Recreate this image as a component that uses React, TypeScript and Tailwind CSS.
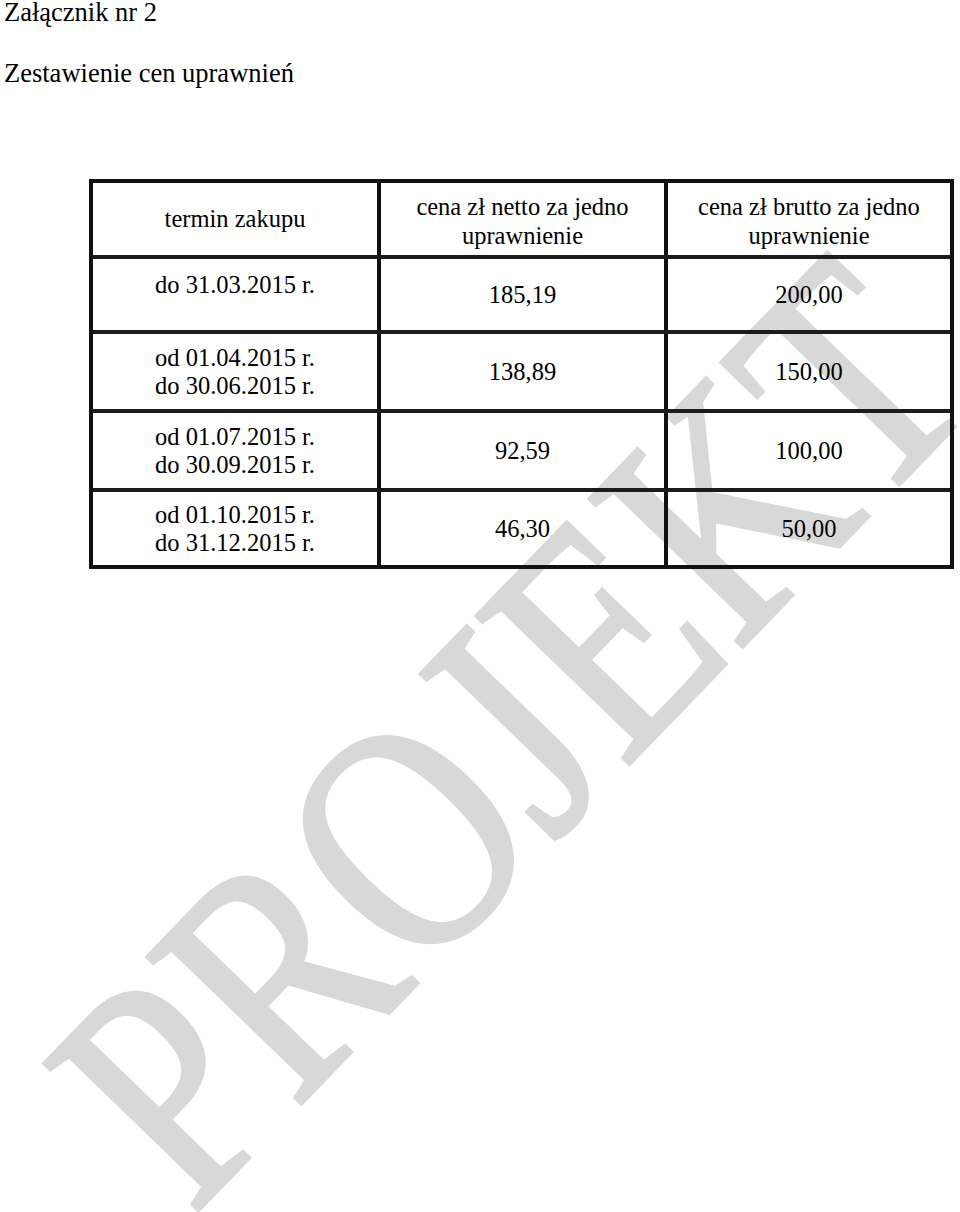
const rows = [
  { term: ["do 31.03.2015 r."], netto: "185,19", brutto: "200,00", h: "h-[75px]", topAligned: true },
  { term: ["od 01.04.2015 r.", "do 30.06.2015 r."], netto: "138,89", brutto: "150,00", h: "h-[79px]", topAligned: false },
  { term: ["od 01.07.2015 r.", "do 30.09.2015 r."], netto: "92,59", brutto: "100,00", h: "h-[79px]", topAligned: false },
  { term: ["od 01.10.2015 r.", "do 31.12.2015 r."], netto: "46,30", brutto: "50,00", h: "h-[77px]", topAligned: false },
];

function Watermark() {
  return (
    <div
      aria-hidden
      className="pointer-events-none absolute left-[509px] top-[731px] z-0 -translate-x-1/2 -translate-y-1/2 rotate-[-46deg] scale-x-[0.82] select-none whitespace-nowrap text-[325px] leading-none text-[#d8d8d8] [-webkit-text-stroke:4px_#d8d8d8]"
    >
      PROJEKT
    </div>
  );
}

function PriceTable() {
  return (
    <div className="ml-[85px] mt-[94px] w-[865px] border-[4px] border-[#111] text-[24.5px]">
      {/* header */}
      <div className="flex h-[72px] text-center">
        <div className="flex w-[284px] items-center justify-center leading-[28px]">termin zakupu</div>
        <div className="flex w-[287px] flex-col items-center justify-center border-l-[4px] border-[#111] pt-[4px] leading-[29px]">
          <span>cena zł netto za jedno</span>
          <span>uprawnienie</span>
        </div>
        <div className="flex flex-1 flex-col items-center justify-center border-l-[4px] border-[#111] pt-[4px] leading-[29px]">
          <span>cena zł brutto za jedno</span>
          <span>uprawnienie</span>
        </div>
      </div>

      {rows.map((row) => (
        <div key={row.netto} className={`flex border-t-[4px] border-[#1c1c1c] text-center ${row.h}`}>
          <div
            className={`flex w-[284px] flex-col items-center leading-[28px] ${
              row.topAligned ? "justify-start pt-[12px]" : "justify-center"
            }`}
          >
            {row.term.map((line) => (
              <span key={line}>{line}</span>
            ))}
          </div>
          <div className="flex w-[287px] items-center justify-center border-l-[4px] border-[#111] leading-[28px]">
            {row.netto}
          </div>
          <div className="flex flex-1 items-center justify-center border-l-[4px] border-[#111] leading-[28px]">
            {row.brutto}
          </div>
        </div>
      ))}
    </div>
  );
}

export default function App() {
  return (
    <div className="relative h-[1212px] w-[960px] overflow-hidden bg-white font-['Liberation_Serif','Times_New_Roman',serif] text-black">
      <Watermark />
      <div className="relative z-10 px-[4px]">
        <p className="text-[26.5px] leading-[24px]">Załącznik nr 2</p>
        <p className="mt-[37px] text-[26.5px] leading-[24px]">Zestawienie cen uprawnień</p>
        <PriceTable />
      </div>
    </div>
  );
}
